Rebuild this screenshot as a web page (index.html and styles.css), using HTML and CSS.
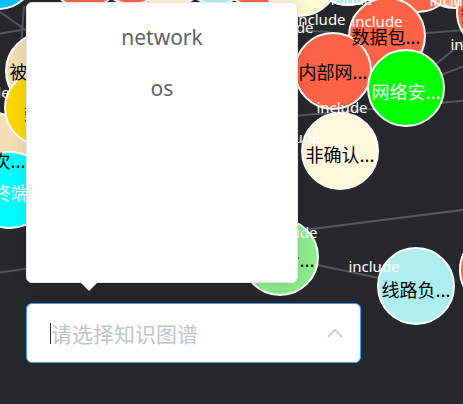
FILE: index.html
```html
<!DOCTYPE html>
<html lang="zh">
<head>
<meta charset="utf-8">
<title>知识图谱</title>
<link rel="stylesheet" href="styles.css">
</head>
<body>
<div class="app">
  <svg class="graph" width="463" height="404" viewBox="0 0 463 404">
    <g class="edges">
      <line x1="-10" y1="274" x2="140" y2="252"/>
      <line x1="240" y1="238" x2="470" y2="209"/>
      <line x1="280" y1="257" x2="416" y2="286"/>
      <line x1="250" y1="120" x2="470" y2="100"/>
      <line x1="407" y1="88" x2="475" y2="32"/>
      <line x1="387" y1="36" x2="480" y2="29"/>
      <line x1="407" y1="88" x2="480" y2="60"/>
      <line x1="-10" y1="35" x2="60" y2="24"/>
      <line x1="24" y1="6" x2="20" y2="60"/>
      <line x1="0" y1="12" x2="40" y2="40"/>
      <line x1="260" y1="28" x2="330" y2="32"/>
    </g>
    <g class="nodes">
      <circle cx="85" cy="-30" r="38" fill="#ff6347"/>
      <circle cx="132" cy="-34" r="38" fill="#ff6347"/>
      <circle cx="170" cy="-31" r="38" fill="#fffacd"/>
      <circle cx="216" cy="-34" r="38" fill="#afeeee"/>
      <circle cx="256" cy="-32" r="38" fill="#ff6347"/>
      <circle cx="300" cy="-22" r="38" fill="#fffacd"/>
      <circle cx="348" cy="-33" r="38" fill="#afeeee"/>
      <circle cx="418" cy="-26" r="38" fill="#ff6347"/>
      <circle cx="455" cy="-30" r="38" fill="#ffa07a"/>
      <circle cx="495" cy="12" r="38" fill="#ff6347"/>
      <circle cx="-2" cy="-29" r="38" fill="#00bfff"/>
      <circle cx="44" cy="71" r="38" fill="#f5deb3"/>
      <circle cx="-10" cy="150" r="38" fill="#f5deb3"/>
      <circle cx="42" cy="108" r="37" fill="#ffd700"/>
      <circle cx="10" cy="190" r="38" fill="#00ffff"/>
      <circle cx="387" cy="36" r="38" fill="#ff6347"/>
      <circle cx="333" cy="71" r="38" fill="#ff6347"/>
      <circle cx="406" cy="88" r="38" fill="#00ff00"/>
      <circle cx="340" cy="151" r="38" fill="#fff8dc"/>
      <circle cx="280" cy="257" r="38" fill="#90ee90"/>
      <circle cx="416" cy="286" r="38" fill="#afeeee"/>
      <circle cx="498" cy="270" r="38" fill="#ff6347"/>
    </g>
    <g class="edge-labels">
      <text x="347" y="-1">include</text>
      <text x="455" y="0">include</text>
      <text x="320" y="19">include</text>
      <text x="288" y="27">include</text>
      <text x="377" y="21">include</text>
      <text x="476" y="44">include</text>
      <text x="342" y="107">include</text>
      <text x="-16" y="92">include</text>
      <text x="295" y="137">include</text>
      <text x="292" y="232">include</text>
      <text x="374" y="266">include</text>
    </g>
    <g class="node-labels">
      <text x="495" y="14">安全协...</text>
      <text x="44" y="71">被动攻...</text>
      <text x="42" y="112">数据</text>
      <text x="0" y="160">层次...</text>
      <text x="9" y="192" class="light">用终端...</text>
      <text x="386" y="36">数据包...</text>
      <text x="333" y="71">内部网...</text>
      <text x="406" y="91" class="light">网络安...</text>
      <text x="340" y="154">非确认...</text>
      <text x="280" y="259">传输介...</text>
      <text x="416" y="289">线路负...</text>
    </g>
  </svg>

  <div class="picker">
    <div class="dropdown">
      <ul class="options">
        <li class="option">network</li>
        <li class="option">os</li>
      </ul>
      <div class="arrow"></div>
    </div>
    <div class="select">
      <span class="caret"></span>
      <span class="placeholder">请选择知识图谱</span>
      <svg class="chevron" width="16" height="10" viewBox="0 0 16 10">
        <polyline points="1,9 8,1.8 15,9"/>
      </svg>
    </div>
  </div>
</div>
</body>
</html>
```

FILE: styles.css
```css
* {
  box-sizing: border-box;
}

html, body {
  margin: 0;
  padding: 0;
}

body {
  background: #26282c;
  font-family: "Noto Sans", "Noto Sans CJK SC", sans-serif;
  overflow: hidden;
}

.app {
  position: relative;
  width: 463px;
  height: 404px;
  overflow: hidden;
}

.graph {
  position: absolute;
  left: 0;
  top: 0;
  display: block;
}

.edges line {
  stroke: #55575c;
  stroke-width: 2;
}

.nodes circle {
  stroke: #ffffff;
  stroke-width: 2;
}

.edge-labels text {
  fill: #ffffff;
  font-family: "Noto Sans", sans-serif;
  font-size: 15px;
  text-anchor: middle;
  dominant-baseline: central;
}

.node-labels text {
  fill: #000000;
  font-family: "Noto Sans CJK SC", sans-serif;
  font-size: 18px;
  text-anchor: middle;
  dominant-baseline: central;
}

.node-labels text.light {
  fill: #ffffff;
}

.picker {
  position: absolute;
  left: 26px;
  top: 2px;
  width: 335px;
  display: flex;
  flex-direction: column;
  gap: 20px;
}

.dropdown {
  position: relative;
  width: 272px;
  height: 281px;
  background: #ffffff;
  border: 1px solid #e4e7ed;
  border-radius: 6px;
  box-shadow: 0 3px 18px rgba(0, 0, 0, 0.12);
}

.options {
  list-style: none;
  margin: 0;
  padding: 9px 0;
}

.option {
  height: 51px;
  line-height: 51px;
  text-align: center;
  font-size: 21px;
  color: #606266;
}

.arrow {
  position: absolute;
  left: 53px;
  bottom: -9px;
  width: 0;
  height: 0;
  border-left: 9px solid transparent;
  border-right: 9px solid transparent;
  border-top: 9px solid #ffffff;
}

.select {
  width: 335px;
  height: 60px;
  background: #ffffff;
  border: 1px solid #409eff;
  border-radius: 6px;
  display: flex;
  align-items: center;
  padding: 0 17px 0 23px;
}

.caret {
  width: 1px;
  height: 21px;
  margin-right: -1px;
  background: #303133;
}

.placeholder {
  flex: 1;
  font-family: "Noto Sans CJK SC", sans-serif;
  font-size: 21px;
  color: #c0c4cc;
  padding-left: 1px;
  line-height: 1;
}

.chevron {
  display: block;
}

.chevron polyline {
  fill: none;
  stroke: #c0c4cc;
  stroke-width: 1.6;
}
```
